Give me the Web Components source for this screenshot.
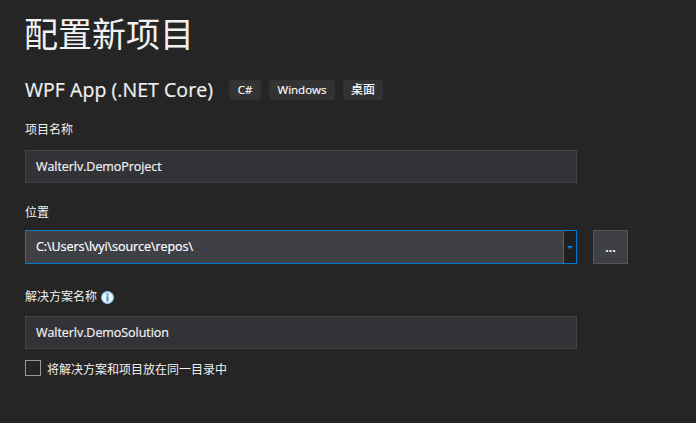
<!DOCTYPE html>
<html lang="zh-CN">
<head>
<meta charset="utf-8">
<title>配置新项目</title>
<style>
html, body { margin: 0; height: 100%; overflow: hidden; background: #252526; }
</style>
</head>
<body>
<project-dialog></project-dialog>
<script>
const define = (name, html) => customElements.define(name, class extends HTMLElement {
  constructor() {
    super();
    const t = document.createElement('template');
    t.innerHTML = html;
    this.attachShadow({ mode: 'open' }).append(t.content.cloneNode(true));
  }
});

define('tag-chip', `<style>
:host { display: flex; align-items: center; justify-content: center; box-sizing: border-box; height: 20px; border-radius: 4px; background: #333334; color: #fff; font-size: 11.5px; line-height: 20px; white-space: nowrap; -webkit-text-stroke: .15px; }
</style><slot></slot>`);

define('field-label', `<style>
:host { display: flex; align-items: center; gap: 4px; height: 16px; font-size: 12px; line-height: 16px; color: #f1f1f1; white-space: nowrap; }
</style><slot></slot>`);

define('text-field', `<style>
:host { display: flex; align-items: center; box-sizing: border-box; width: 552px; height: 33px; padding-left: 10px; border: 1px solid #434346; background: #333337; color: #f1f1f1; font-size: 12.5px; letter-spacing: -.06px; line-height: 18px; white-space: nowrap; -webkit-text-stroke: .2px; }
</style><slot></slot>`);

define('combo-field', `<style>
:host { display: flex; box-sizing: border-box; width: 552px; height: 34px; border: 1px solid #007acc; background: #3f3f46; color: #fff; font-size: 12.5px; letter-spacing: -.06px; line-height: 32px; white-space: nowrap; -webkit-text-stroke: .2px; }
.value { flex: 1; padding-left: 10px; }
.drop { width: 12px; border-left: 1px solid #007acc; background: #1f1f20; display: flex; align-items: center; justify-content: center; }
svg { display: block; }
</style><div class="value"><slot></slot></div><div class="drop"><svg width="6" height="3" viewBox="0 0 6 3"><path d="M0 0H6L3 3Z" fill="#0088e0"/></svg></div>`);

define('browse-button', `<style>
:host { display: flex; align-items: center; justify-content: center; box-sizing: border-box; width: 35px; height: 34px; border: 1px solid #555558; background: #3f3f46; color: #fff; font-size: 12px; font-weight: 700; }
</style><slot></slot>`);

define('info-icon', `<style>
:host { display: block; width: 13px; height: 13px; } svg { display: block; }
</style><svg width="13" height="13" viewBox="0 0 13 13"><circle cx="6.5" cy="6.5" r="5.9" fill="#eef3f6" stroke="#8cc5e4" stroke-width="1.2"/><path d="M5.5 2.5h2v2h-2zM5.5 5.2h2v5.3h-2z" fill="#1e9be0"/></svg>`);

define('check-option', `<style>
:host { display: flex; align-items: center; gap: 6px; height: 16px; color: #f1f1f1; font-size: 12px; line-height: 16px; white-space: nowrap; }
i { box-sizing: border-box; width: 16px; height: 16px; border: 1px solid #999; background: #252526; }
span { padding-top: 4px; }
</style><i></i><span><slot></slot></span>`);

define('project-dialog', `<style>
:host { display: flex; flex-direction: column; align-items: flex-start; box-sizing: border-box; height: 423px; padding: 11px 0 0 25px; background: #252526; font-family: "Open Sans", "Noto Sans CJK SC", sans-serif; }
h1 { margin: 0 0 0 -1px; height: 46px; font-size: 34px; line-height: 46px; font-weight: 400; color: #f1f1f1; white-space: nowrap; }
header { display: flex; align-items: center; height: 28px; margin: 19px 0 18px; gap: 8px; }
h2 { margin: 0 8px 0 0; width: 188px; font-size: 19.5px; letter-spacing: .05px; line-height: 28px; font-weight: 400; color: #f1f1f1; white-space: nowrap; -webkit-text-stroke: .2px; }
header tag-chip { margin-top: -1px; }
.row { display: flex; gap: 16px; }
</style>
<h1>配置新项目</h1>
<header><h2>WPF App (.NET Core)</h2><tag-chip style="width:32px">C#</tag-chip><tag-chip style="width:66px">Windows</tag-chip><tag-chip style="width:40px;font-size:12px">桌面</tag-chip></header>
<field-label>项目名称</field-label>
<text-field style="margin-top:12px"><span>Walterlv.DemoProject</span></text-field>
<field-label style="margin-top:22px">位置</field-label>
<div class="row" style="margin-top:9px"><combo-field><span>C:\\Users\\lvyi\\source\\repos\\</span></combo-field><browse-button>...</browse-button></div>
<field-label style="margin-top:25px"><span>解决方案名称</span><info-icon></info-icon></field-label>
<text-field style="margin-top:11px"><span>Walterlv.DemoSolution</span></text-field>
<check-option style="margin-top:11px">将解决方案和项目放在同一目录中</check-option>`);
</script>
</body>
</html>
